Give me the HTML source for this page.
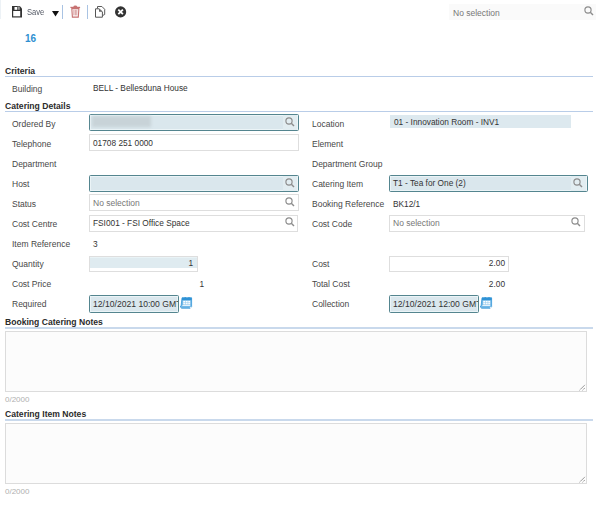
<!DOCTYPE html>
<html><head><meta charset="utf-8">
<style>
html,body{margin:0;padding:0;background:#fff;width:600px;height:522px;overflow:hidden;position:relative;font-family:"Liberation Sans",sans-serif;}
.a{position:absolute;white-space:nowrap;}
.t{position:absolute;white-space:nowrap;font-size:8.5px;line-height:10px;}
.val{font-size:8.3px;}
.lbl{color:#474747;}
.val{color:#333;}
.hdr{position:absolute;white-space:nowrap;font-size:8.6px;line-height:10px;font-weight:bold;color:#2b2b2b;left:5px;}
.line{position:absolute;left:5px;width:588px;height:1px;background:#b9cde8;}
.box{position:absolute;box-sizing:border-box;height:17px;border:1px solid #dedede;background:#fff;}
.foc{position:absolute;box-sizing:border-box;height:17px;border:1px solid #54858f;border-radius:1.5px;background:#dae7ed;box-shadow:inset 1px 1px 0 #ebf4f7, inset -1px -1px 0 #ebf4f7;}
.ro{position:absolute;height:14px;background:#dde9ef;}
.ns{color:#777;}
.srch{position:absolute;width:10px;height:10px;}
.ta{position:absolute;left:5px;width:582px;height:61px;box-sizing:border-box;border:1px solid #dcdcdc;background:#fcfcfc;}
.cnt{position:absolute;left:5px;font-size:8px;line-height:10px;color:#b0b0b0;}
</style></head><body>
<!-- toolbar -->
<div class="a" style="left:0;top:0;width:1px;height:19px;background:#edf2f6;"></div>
<svg class="a" style="left:11px;top:5px" width="13" height="14" viewBox="0 0 13 14">
  <path d="M1 1 H8.8 L11 3.4 V12.5 H1 Z" fill="#333"/>
  <rect x="3.5" y="2" width="2.5" height="2.8" fill="#fff"/>
  <rect x="6.4" y="1.5" width="2.4" height="3.3" fill="#9a9a9a"/>
  <rect x="2.2" y="6" width="7.0" height="5.3" fill="#fff"/>
</svg>
<div class="t" style="left:27px;top:7px;color:#555a66;font-size:9.4px;transform:scaleX(0.81);transform-origin:0 0;">Save</div>
<svg class="a" style="left:52px;top:11px" width="7" height="6" viewBox="0 0 7 6"><path d="M0 0 H7 L3.5 5.5 Z" fill="#111"/></svg>
<div class="a" style="left:62px;top:5px;width:1px;height:14px;background:#a9c3e3;"></div>
<svg class="a" style="left:69px;top:4px" width="13" height="15" viewBox="0 0 13 15">
  <path d="M1.4 3.4 H11.1" stroke="#c77272" stroke-width="1.2" fill="none"/>
  <path d="M4.3 2.9 Q4.5 1.5 6.3 1.5 Q8.1 1.5 8.3 2.9 Z" fill="#c77272"/>
  <path d="M2.8 4.6 H9.9 L9.3 13.1 H3.4 Z" fill="none" stroke="#c77272" stroke-width="1.1"/>
  <path d="M4.9 5.8 V11.4 M6.35 5.8 V11.4 M7.8 5.8 V11.4" stroke="#cd8484" stroke-width="0.8"/>
</svg>
<div class="a" style="left:87px;top:5px;width:1px;height:14px;background:#a9c3e3;"></div>
<svg class="a" style="left:94px;top:5px" width="12" height="14" viewBox="0 0 12 14">
  <path d="M3.5 3.6 V1.5 H7.9 L10.7 4.3 V9.5 L8.6 10.5" fill="#fff" stroke="#5a5a5a" stroke-width="1" stroke-linejoin="round"/>
  <path d="M1.5 3.8 H5 L8.4 6.8 V12.2 H1.5 Z" fill="#fff" stroke="#555" stroke-width="1" stroke-linejoin="round"/>
  <path d="M5 3.8 V6.8 H8.4 Z" fill="#666"/>
</svg>
<svg class="a" style="left:114px;top:6px" width="13" height="13" viewBox="0 0 13 13">
  <circle cx="6.6" cy="5.9" r="5.6" fill="#333"/>
  <path d="M4.3 3.6 L8.9 8.2 M8.9 3.6 L4.3 8.2" stroke="#fff" stroke-width="1.8"/>
</svg>
<div class="a" style="left:449px;top:4px;width:147px;height:16px;background:#fafafa;"></div>
<div class="t ns" style="left:453px;top:8px;">No selection</div>
<svg class="srch" style="left:584px;top:6px" viewBox="0 0 10 10"><circle cx="4" cy="4" r="3.1" fill="none" stroke="#8c8c8c" stroke-width="1.15"/><path d="M6.3 6.3 L9 9" stroke="#8c8c8c" stroke-width="1.4"/></svg>
<div class="a" style="left:25px;top:33px;font-size:10px;line-height:12px;font-weight:bold;color:#2e90d1;">16</div>

<!-- Criteria -->
<div class="hdr" style="top:66px;">Criteria</div>
<div class="line" style="top:76px;"></div>
<div class="t lbl" style="left:12px;top:84px;">Building</div>
<div class="t val" style="left:93px;top:83px;">BELL - Bellesduna House</div>

<!-- Catering Details -->
<div class="hdr" style="top:101px;">Catering Details</div>
<div class="line" style="top:111px;"></div>

<!-- left col -->
<div class="t lbl" style="left:12px;top:119px;">Ordered By</div>
<div class="foc" style="left:89px;top:114px;width:210px;"></div>
<div class="a" style="left:283px;top:115px;width:14px;height:15px;background:#e2edf1;"></div>
<div class="a" style="left:92px;top:116px;width:59px;height:11px;background:#c8d3d8;filter:blur(1.5px);"></div>
<svg class="srch" style="left:285px;top:117px" viewBox="0 0 10 10"><circle cx="4" cy="4" r="3.1" fill="none" stroke="#8c8c8c" stroke-width="1.15"/><path d="M6.3 6.3 L9 9" stroke="#8c8c8c" stroke-width="1.4"/></svg>

<div class="t lbl" style="left:12px;top:139px;">Telephone</div>
<div class="box" style="left:89px;top:134px;width:210px;"></div>
<div class="t val" style="left:93px;top:138px;">01708 251 0000</div>

<div class="t lbl" style="left:12px;top:159px;">Department</div>

<div class="t lbl" style="left:12px;top:179px;">Host</div>
<div class="foc" style="left:89px;top:175px;width:210px;"></div>
<div class="a" style="left:283px;top:176px;width:14px;height:15px;background:#e2edf1;"></div>
<svg class="srch" style="left:285px;top:178px" viewBox="0 0 10 10"><circle cx="4" cy="4" r="3.1" fill="none" stroke="#8c8c8c" stroke-width="1.15"/><path d="M6.3 6.3 L9 9" stroke="#8c8c8c" stroke-width="1.4"/></svg>

<div class="t lbl" style="left:12px;top:199px;">Status</div>
<div class="box" style="left:89px;top:194px;width:210px;"></div>
<div class="t ns" style="left:93px;top:198px;">No selection</div>
<svg class="srch" style="left:285px;top:197px" viewBox="0 0 10 10"><circle cx="4" cy="4" r="3.1" fill="none" stroke="#8c8c8c" stroke-width="1.15"/><path d="M6.3 6.3 L9 9" stroke="#8c8c8c" stroke-width="1.4"/></svg>

<div class="t lbl" style="left:12px;top:219px;">Cost Centre</div>
<div class="box" style="left:89px;top:215px;width:209px;"></div>
<div class="t val" style="left:93px;top:218px;">FSI001 - FSI Office Space</div>
<svg class="srch" style="left:285px;top:217px" viewBox="0 0 10 10"><circle cx="4" cy="4" r="3.1" fill="none" stroke="#8c8c8c" stroke-width="1.15"/><path d="M6.3 6.3 L9 9" stroke="#8c8c8c" stroke-width="1.4"/></svg>

<div class="t lbl" style="left:12px;top:239px;">Item Reference</div>
<div class="t val" style="left:93px;top:239px;">3</div>

<div class="t lbl" style="left:12px;top:259px;">Quantity</div>
<div class="box" style="left:89px;top:256px;width:109px;height:16px;background:linear-gradient(#e9f3f6 0,#e9f3f6 1px,#dfebf0 1px,#dfebf0 11px,#fff 11px);"></div>
<div class="t val" style="left:150px;width:43px;text-align:right;top:258px;">1</div>

<div class="t lbl" style="left:12px;top:279px;">Cost Price</div>
<div class="t val" style="left:161px;width:43px;text-align:right;top:279px;">1</div>

<div class="t lbl" style="left:12px;top:299px;">Required</div>
<div class="foc" style="left:89px;top:295px;width:90px;height:18px;overflow:hidden;"><div class="t val" style="left:3px;top:3px;font-size:8.6px;">12/10/2021 10:00 GMT</div></div>
<svg class="a" style="left:179px;top:296px" width="14" height="14" viewBox="0 0 14 14">
  <path d="M3 1.8 H12.6 V10.6 L11.2 12.2 H2.6 L1.3 11 L2.2 9.2 Z" fill="#74b9e7" stroke="#3597d8" stroke-width="0.8"/>
  <rect x="3" y="1.8" width="9.6" height="2.3" fill="#2f92d5"/>
  <circle cx="6.2" cy="1.6" r="0.7" fill="#2f92d5"/><circle cx="10" cy="1.6" r="0.7" fill="#2f92d5"/>
  <rect x="4.2" y="4.8" width="7" height="3.7" fill="#fff"/>
  <path d="M4.2 6.65 H11.2 M6.5 4.8 V8.5 M8.9 4.8 V8.5" stroke="#8cc6ec" stroke-width="0.55"/>
  <rect x="3.4" y="9.1" width="7.8" height="0.9" fill="#fff" opacity="0.9"/>
  <path d="M10.6 11.9 L12.2 10.4 V11.9 Z" fill="#fff"/>
</svg>

<!-- right col -->
<div class="t lbl" style="left:312px;top:119px;">Location</div>
<div class="ro" style="left:390px;top:115px;width:181px;height:13px;"></div>
<div class="t val" style="left:394px;top:117px;">01 - Innovation Room - INV1</div>

<div class="t lbl" style="left:312px;top:139px;">Element</div>
<div class="t lbl" style="left:312px;top:159px;">Department Group</div>

<div class="t lbl" style="left:312px;top:179px;">Catering Item</div>
<div class="foc" style="left:389px;top:175px;width:199px;"></div>
<div class="a" style="left:571px;top:176px;width:15px;height:15px;background:#e2edf1;"></div>
<div class="t val" style="left:393px;top:178px;">T1 - Tea for One (2)</div>
<svg class="srch" style="left:573px;top:178px" viewBox="0 0 10 10"><circle cx="4" cy="4" r="3.1" fill="none" stroke="#8c8c8c" stroke-width="1.15"/><path d="M6.3 6.3 L9 9" stroke="#8c8c8c" stroke-width="1.4"/></svg>

<div class="t lbl" style="left:312px;top:199px;">Booking Reference</div>
<div class="t val" style="left:393px;top:199px;">BK12/1</div>

<div class="t lbl" style="left:312px;top:219px;">Cost Code</div>
<div class="box" style="left:389px;top:215px;width:196px;"></div>
<div class="t ns" style="left:393px;top:218px;">No selection</div>
<svg class="srch" style="left:571px;top:217px" viewBox="0 0 10 10"><circle cx="4" cy="4" r="3.1" fill="none" stroke="#8c8c8c" stroke-width="1.15"/><path d="M6.3 6.3 L9 9" stroke="#8c8c8c" stroke-width="1.4"/></svg>

<div class="t lbl" style="left:312px;top:259px;">Cost</div>
<div class="box" style="left:389px;top:256px;width:120px;height:16px;"></div>
<div class="t val" style="left:455px;width:50px;text-align:right;top:258px;">2.00</div>

<div class="t lbl" style="left:312px;top:279px;">Total Cost</div>
<div class="t val" style="left:455px;width:50px;text-align:right;top:279px;">2.00</div>

<div class="t lbl" style="left:312px;top:299px;">Collection</div>
<div class="foc" style="left:389px;top:295px;width:90px;height:18px;overflow:hidden;"><div class="t val" style="left:3px;top:3px;font-size:8.6px;">12/10/2021 12:00 GMT</div></div>
<svg class="a" style="left:479px;top:296px" width="14" height="14" viewBox="0 0 14 14">
  <path d="M3 1.8 H12.6 V10.6 L11.2 12.2 H2.6 L1.3 11 L2.2 9.2 Z" fill="#74b9e7" stroke="#3597d8" stroke-width="0.8"/>
  <rect x="3" y="1.8" width="9.6" height="2.3" fill="#2f92d5"/>
  <circle cx="6.2" cy="1.6" r="0.7" fill="#2f92d5"/><circle cx="10" cy="1.6" r="0.7" fill="#2f92d5"/>
  <rect x="4.2" y="4.8" width="7" height="3.7" fill="#fff"/>
  <path d="M4.2 6.65 H11.2 M6.5 4.8 V8.5 M8.9 4.8 V8.5" stroke="#8cc6ec" stroke-width="0.55"/>
  <rect x="3.4" y="9.1" width="7.8" height="0.9" fill="#fff" opacity="0.9"/>
  <path d="M10.6 11.9 L12.2 10.4 V11.9 Z" fill="#fff"/>
</svg>

<!-- notes -->
<div class="hdr" style="top:317px;">Booking Catering Notes</div>
<div class="line" style="top:327px;height:2px;background:#c9d9ec;"></div>
<div class="ta" style="top:331px;"></div>
<svg class="a" style="left:578px;top:383px" width="9" height="9" viewBox="0 0 9 9"><path d="M1.6 7.2 L7 1.8 M4.6 7.2 L7 4.8" stroke="#7a7a7a" stroke-width="1" stroke-dasharray="1.1 0.5"/><path d="M2.4 7.8 L7.6 2.6 M5.4 7.8 L7.6 5.6" stroke="#fff" stroke-width="0.6"/></svg>
<div class="cnt" style="top:395px;">0/2000</div>

<div class="hdr" style="top:409px;">Catering Item Notes</div>
<div class="line" style="top:419px;height:2px;background:#c9d9ec;"></div>
<div class="ta" style="top:423px;"></div>
<svg class="a" style="left:578px;top:475px" width="9" height="9" viewBox="0 0 9 9"><path d="M1.6 7.2 L7 1.8 M4.6 7.2 L7 4.8" stroke="#7a7a7a" stroke-width="1" stroke-dasharray="1.1 0.5"/><path d="M2.4 7.8 L7.6 2.6 M5.4 7.8 L7.6 5.6" stroke="#fff" stroke-width="0.6"/></svg>
<div class="cnt" style="top:487px;">0/2000</div>
</body></html>
